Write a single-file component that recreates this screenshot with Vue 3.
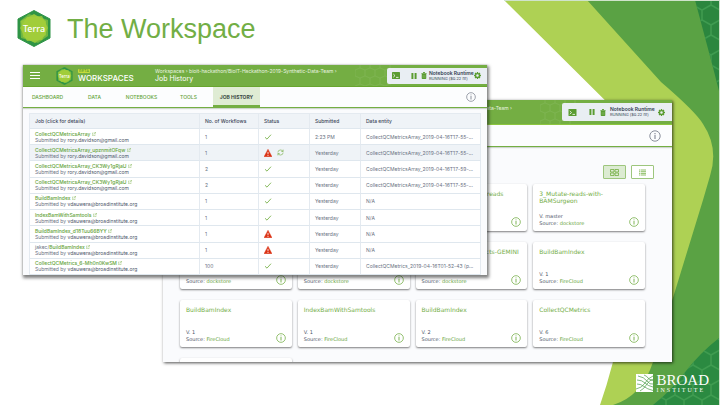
<script setup>
const crumb = 'Workspaces › bioit-hackathon/BioIT-Hackathon-2019-Synthetic-Data-Team ›'
const tabs = ['DASHBOARD', 'DATA', 'NOTEBOOKS', 'TOOLS', 'JOB HISTORY']
const rory = 'rory.davidson@gmail.com'
const vda = 'vdauwera@broadinstitute.org'

const jobs = [
  { name: 'CollectQCMetricsArray', by: rory, n: 1, ok: true, when: '2:23 PM', entity: 'CollectQCMetricsArray_2019-04-16T17-55-...' },
  { name: 'CollectQCMetricsArray_upznmitOFqw', by: rory, n: 1, ok: false, retry: true, when: 'Yesterday', entity: 'CollectQCMetricsArray_2019-04-16T17-55-...' },
  { name: 'CollectQCMetricsArray_CK3Wy1gRjaU', by: rory, n: 2, ok: true, when: 'Yesterday', entity: 'CollectQCMetricsArray_2019-04-16T17-59-...' },
  { name: 'CollectQCMetricsArray_CK3Wy1gRjaU', by: rory, n: 2, ok: true, when: 'Yesterday', entity: 'CollectQCMetricsArray_2019-04-16T17-55-...' },
  { name: 'BuildBamIndex', by: vda, n: 1, ok: true, when: 'Yesterday', entity: 'N/A' },
  { name: 'IndexBamWithSamtools', by: vda, n: 1, ok: true, when: 'Yesterday', entity: 'N/A' },
  { name: 'BuildBamIndex_d18Tuu66BYY', by: vda, n: 1, ok: false, when: 'Yesterday', entity: 'N/A' },
  { prefix: 'jakec/', name: 'BuildBamIndex', by: vda, n: 1, ok: false, when: 'Yesterday', entity: 'N/A' },
  { name: 'CollectQCMetrics_6-Mh0n0KwSM', by: vda, n: 100, ok: true, when: 'Yesterday', entity: 'CollectQCMetrics_2019-04-16T01-52-43 (p...' },
]

const tools = [
  {},
  {},
  { title: '2_Simulate-synthetic-reads', source: 'dockstore' },
  { title: '3_Mutate-reads-with-BAMSurgeon', v: 'master', source: 'dockstore' },
  { source: 'dockstore' },
  { source: 'dockstore' },
  { title: '6_Predict-variant-effects-GEMINI', source: 'dockstore' },
  { title: 'BuildBamIndex', v: '1', source: 'FireCloud' },
  { title: 'BuildBamIndex', v: '1', source: 'FireCloud' },
  { title: 'IndexBamWithSamtools', v: '1', source: 'FireCloud' },
  { title: 'BuildBamIndex', v: '2', source: 'FireCloud' },
  { title: 'CollectQCMetrics', v: '6', source: 'FireCloud' },
  {},
]
</script>

<template>
  <main class="slide">
    <svg class="defs" aria-hidden="true">
      <defs>
        <pattern id="hex" width="18" height="30" patternUnits="userSpaceOnUse">
          <path d="M9 0V5L0 10V20L9 25V30M9 5L18 10V20L9 25" fill="none" stroke="#3f9c50" stroke-width="1.5" />
        </pattern>
        <pattern id="hexbar" width="10" height="16" patternUnits="userSpaceOnUse">
          <path d="M5 0V3L0 5V11L5 13V16M5 3L10 5V11L5 13" fill="none" stroke="#8abb61" stroke-width="1" opacity=".4" />
        </pattern>
      </defs>
      <symbol id="terra" viewBox="0 0 34 37">
        <path d="M17 0.5L33 9V28L17 36.5L1 28V9Z" fill="#2f9446" stroke="#2f9446" stroke-linejoin="round" />
        <path d="M12 4L31 10L31 26L21 33L4 28L3 11Z" fill="#6fb640" />
        <path d="M17 4L29 11V25L18 33L6 27L4 11Z" fill="#94c83d" />
        <path d="M10 7L25 6L31 18L25 30L10 31L3 18Z" fill="#a6cf39" opacity=".75" />
        <text x="17" y="22" text-anchor="middle" font-family="Noto Sans" font-size="9" font-weight="500" fill="#fff">Terra</text>
      </symbol>
      <symbol id="terminal" viewBox="0 0 8 7">
        <rect width="8" height="7" rx=".6" fill="#5a9c31" />
        <path d="M1.3 2L3 3.6L1.3 5.2M4 5.4H6.5" fill="none" stroke="#fff" stroke-width=".8" />
      </symbol>
      <symbol id="pause" viewBox="0 0 6 7">
        <path d="M0 0H2.3V7H0ZM3.7 0H6V7H3.7Z" fill="#5a9c31" />
      </symbol>
      <symbol id="trash" viewBox="0 0 6 8">
        <path d="M0 1H1.8L2.2 0H3.8L4.2 1H6V2H0ZM.4 2.4H5.6V7.2Q5.6 8 4.8 8H1.2Q.4 8 .4 7.2Z" fill="#5a9c31" />
        <path d="M2 3.5V6.8M4 3.5V6.8" stroke="#a8cb8f" stroke-width=".5" />
      </symbol>
      <symbol id="gear" viewBox="0 0 8 8">
        <path d="M4 0V8M0 4H8M1.2 1.2L6.8 6.8M6.8 1.2L1.2 6.8" stroke="#5a9c31" stroke-width="1.5" />
        <circle cx="4" cy="4" r="2.2" fill="#e9eef3" stroke="#5a9c31" stroke-width="1.5" />
      </symbol>
      <symbol id="info" viewBox="0 0 12 12">
        <circle cx="6" cy="6" r="5.2" fill="none" stroke="currentColor" stroke-width="1" />
        <path d="M6 3V4M6 4.8V9" stroke="currentColor" stroke-width="1.2" />
      </symbol>
      <symbol id="check" viewBox="0 0 8 7">
        <path d="M.5 3.8L2.8 6L7.5 .8" fill="none" stroke="#74ae43" stroke-width="1" />
      </symbol>
      <symbol id="warn" viewBox="0 0 8 8">
        <path d="M4 .2L8 7.8H0Z" fill="#db3214" stroke="#db3214" stroke-width=".4" stroke-linejoin="round" />
        <path d="M4 2.8V5.3M4 6V7" stroke="#fff" stroke-width=".8" />
      </symbol>
      <symbol id="retry" viewBox="0 0 8 8">
        <path d="M1 3.8Q1.2 1.2 4 1.1Q5.8 1.2 7 2.8M7 .7V2.9H4.9M7 4.2Q6.8 6.8 4 6.9Q2.2 6.8 1 5.2M1 7.3V5.1H3.1" fill="none" stroke="#74ae43" stroke-width=".7" />
      </symbol>
      <symbol id="pop" viewBox="0 0 4 4">
        <path d="M1.6 1H.3V3.7H3V2.4M2.2 .3H3.7V1.8M3.7 .3L1.6 2.4" fill="none" stroke="#8abb61" stroke-width=".5" />
      </symbol>
    </svg>

    <svg class="art" viewBox="0 0 720 405" preserveAspectRatio="none" aria-hidden="true">
      <path d="M504 0H720V405H600Q614 365 622 320L640 135Z" fill="#aed154" />
      <path d="M587 0H719V405H613Q642 396 653 362L676 288L703 200L710 176Q719 148 703 124Q696 112 661 82Z" fill="#5aa244" />
      <path d="M695 0H719V91Q713 67 707 45Z" fill="#2b863e" />
      <path d="M695 0H719V91Q713 67 707 45Z" fill="url(#hex)" />
      <path d="M719 338Q700 353 686 371Q672 390 653 405H719Z" fill="#2b8a41" />
      <path d="M719 338Q700 353 686 371Q672 390 653 405H719Z" fill="url(#hex)" />
      <path d="M504 .5H720M719.5 0V405" stroke="#cfe3cb" stroke-width="1" />
    </svg>

    <header class="heading">
      <svg class="heading-logo" role="img" aria-label="Terra"><use href="#terra" /></svg>
      <h1>The Workspace</h1>
    </header>

    <section class="window back">
      <div class="bar">
        <svg class="bar-hex" aria-hidden="true"><rect width="100%" height="100%" fill="url(#hexbar)" /></svg>
        <span class="crumb">{{ crumb }}</span>
        <div class="runtime">
          <svg class="i-term"><use href="#terminal" /></svg>
          <svg class="i-pause"><use href="#pause" /></svg>
          <svg class="i-trash"><use href="#trash" /></svg>
          <p><strong>Notebook Runtime</strong><span>RUNNING ($0.22 hr)</span></p>
          <svg class="i-gear"><use href="#gear" /></svg>
        </div>
      </div>
      <div class="tabs">
        <svg class="i-info"><use href="#info" /></svg>
      </div>
      <div class="views">
        <button class="view on" type="button" aria-label="Grid view">
          <svg viewBox="0 0 9 7"><path d="M.5 .5H4V3H.5ZM5 .5H8.5V3H5ZM.5 4H4V6.5H.5ZM5 4H8.5V6.5H5Z" fill="none" stroke="#74ae43" stroke-width=".8" /></svg>
        </button>
        <button class="view" type="button" aria-label="List view">
          <svg viewBox="0 0 9 7"><path d="M1 1H2M1 2.7H2M1 4.4H2M1 6H2M2.6 1H8M2.6 2.7H8M2.6 4.4H8M2.6 6H8" stroke="#74ae43" stroke-width=".8" /></svg>
        </button>
      </div>
      <div class="cards">
        <article v-for="(t, i) in tools" :key="i" class="card">
          <h2 v-if="t.title">{{ t.title }}</h2>
          <div v-if="t.source" class="meta">
            <p><span v-if="t.v">V. {{ t.v }}<br /></span>Source: <a href="#">{{ t.source }}</a></p>
            <svg class="i-info"><use href="#info" /></svg>
          </div>
        </article>
      </div>
    </section>

    <section class="window front">
      <div class="bar">
        <svg class="bar-hex" aria-hidden="true"><rect width="100%" height="100%" fill="url(#hexbar)" /></svg>
        <button class="menu" type="button" aria-label="Menu"><i></i><i></i><i></i></button>
        <svg class="bar-logo" role="img" aria-label="Terra"><use href="#terra" /></svg>
        <div class="brand"><small>BETA</small><b>WORKSPACES</b></div>
        <div class="where"><span class="crumb">{{ crumb }}</span><b>Job History</b></div>
        <div class="runtime">
          <svg class="i-term"><use href="#terminal" /></svg>
          <svg class="i-pause"><use href="#pause" /></svg>
          <svg class="i-trash"><use href="#trash" /></svg>
          <p><strong>Notebook Runtime</strong><span>RUNNING ($0.22 hr)</span></p>
          <svg class="i-gear"><use href="#gear" /></svg>
        </div>
      </div>
      <nav class="tabs">
        <a v-for="t in tabs" :key="t" href="#" :class="{ active: t === 'JOB HISTORY' }">{{ t }}</a>
        <svg class="i-info"><use href="#info" /></svg>
      </nav>
      <div class="table-wrap">
        <table>
          <colgroup><col class="c-job" /><col class="c-num" /><col class="c-mid" /><col class="c-mid" /><col /></colgroup>
          <thead>
            <tr><th>Job (click for details)</th><th>No. of Workflows</th><th>Status</th><th>Submitted</th><th>Data entity</th></tr>
          </thead>
          <tbody>
            <tr v-for="(j, i) in jobs" :key="i" :class="{ hover: j.retry }">
              <td>
                <div>{{ j.prefix }}<a href="#">{{ j.name }}</a> <svg class="i-pop"><use href="#pop" /></svg></div>
                <div>Submitted by <span class="who">{{ j.by }}</span></div>
              </td>
              <td>{{ j.n }}</td>
              <td>
                <div class="status">
                  <svg v-if="j.ok" class="i-check"><use href="#check" /></svg>
                  <svg v-else class="i-warn"><use href="#warn" /></svg>
                  <svg v-if="j.retry" class="i-retry"><use href="#retry" /></svg>
                </div>
              </td>
              <td>{{ j.when }}</td>
              <td>{{ j.entity }}</td>
            </tr>
          </tbody>
        </table>
      </div>
    </section>

    <footer class="broad">
      <svg viewBox="0 0 17 18" aria-hidden="true">
        <rect width="17" height="18" fill="#fff" />
        <path d="M2 2Q8 3 11 7T17 10M1 6Q6 6 9 9T17 13M1 10Q5 10 8 12.5T17 16.5M0 15Q6 14 9 9T17 2M4 17Q8 15 11 10T17 6M8 1Q11 2 12 4T17 6" fill="none" stroke="#4b9c48" stroke-width=".7" />
      </svg>
      <div><b>BROAD</b><span>INSTITUTE</span></div>
    </footer>
  </main>
</template>

<style>
body {
  margin: 0;
  background: #fff;
}
</style>

<style scoped>
* {
  box-sizing: border-box;
}
.slide {
  position: relative;
  display: flex;
  flex-direction: column;
  justify-content: space-between;
  min-height: 100vh;
  overflow: hidden;
  font-family: Inter, "Open Sans", sans-serif;
  font-size: 5px;
  color: #6a7283;
}
p,
h1,
h2 {
  margin: 0;
}
a {
  color: #64a338;
  text-decoration: none;
  font-weight: 500;
}
button {
  padding: 0;
  border: 0;
  background: none;
}
svg {
  display: block;
  flex: none;
}
.defs {
  position: absolute;
  width: 0;
  height: 0;
}
.art {
  position: absolute;
  inset: 0;
  width: 100%;
  height: 100%;
}

.heading {
  position: relative;
  display: flex;
  align-items: center;
  gap: 16px;
  padding: 10px 17px;
}
.heading-logo {
  width: 34px;
  height: 37px;
}
.heading h1 {
  font: 27px/36px "Liberation Sans", Arial, sans-serif;
  color: #72ae45;
}

.window {
  position: absolute;
  display: flex;
  flex-direction: column;
  overflow: hidden;
  background: #fafbfd;
}
.front {
  top: 65px;
  right: 233px;
  bottom: 130px;
  left: 23px;
  box-shadow: 0 0 1px #8d928f, 1px 2px 3px 1px rgba(0, 0, 0, 0.5);
}
.back {
  top: 100px;
  right: 48px;
  bottom: 43px;
  left: 163px;
  box-shadow: 1px 1px 3px rgba(0, 0, 0, 0.7);
}

.bar {
  position: relative;
  display: flex;
  align-items: center;
  flex: none;
  height: 22px;
  padding-left: 7px;
  background: #74ae43;
  border-bottom: 1px solid #68a52f;
  color: #fff;
}
.back .bar {
  height: 25px;
  justify-content: flex-end;
  border-bottom-color: #8cc63f;
}
.bar-hex {
  position: absolute;
  top: 0;
  right: 96px;
  width: 36px;
  height: 100%;
}
.menu {
  display: flex;
  flex-direction: column;
  gap: 2px;
  width: 10px;
}
.menu i {
  height: 1px;
  background: #fff;
}
.bar-logo {
  width: 17px;
  height: 18px;
  margin-left: 16px;
}
.brand {
  display: flex;
  flex-direction: column;
  align-items: flex-start;
  width: 82px;
  padding-left: 5px;
}
.brand small {
  padding: 0 1px;
  border-radius: 1px;
  background: #c5dc3a;
  color: #5a9c31;
  font-size: 4px;
  line-height: 4px;
  font-weight: 500;
}
.brand b {
  font-size: 8px;
  line-height: 10px;
  font-weight: 500;
}
.where {
  position: relative;
  flex: 1;
  display: flex;
  flex-direction: column;
  white-space: nowrap;
}
.crumb {
  line-height: 6px;
  color: #eaf4e1;
  white-space: nowrap;
}
.where b {
  font-size: 7px;
  line-height: 9px;
  font-weight: 400;
}
.back .crumb {
  position: relative;
  padding: 0 50px 8px 0;
}
.runtime {
  position: relative;
  display: flex;
  align-items: center;
  width: 100px;
  height: 16px;
  padding-left: 5px;
  border-radius: 2px 0 0 2px;
  background: #e9eef3;
  color: #333f52;
}
.back .runtime {
  width: 110px;
  height: 18px;
  padding-left: 6px;
}
.i-term {
  width: 8px;
  height: 7px;
}
.i-pause {
  width: 6px;
  height: 6px;
  margin-left: 11px;
}
.i-trash {
  width: 6px;
  height: 7px;
  margin-left: 4px;
}
.i-gear {
  width: 7px;
  height: 7px;
  margin-left: auto;
  margin-right: 6px;
}
.back .i-term {
  width: 9px;
}
.back .i-pause {
  margin-left: 12px;
}
.back .i-trash {
  margin-left: 5px;
}
.back .runtime p {
  margin-left: 4px;
}
.back .i-gear {
  margin-right: 7px;
}
.runtime p {
  display: flex;
  flex-direction: column;
  margin-left: 2px;
  white-space: nowrap;
}
.runtime strong {
  line-height: 5px;
  font-weight: 600;
}
.runtime span {
  font-size: 4px;
  line-height: 5px;
}

.tabs {
  display: flex;
  align-items: stretch;
  flex: none;
  height: 21px;
  padding-left: 2px;
  background: #fcfdfe;
  border-bottom: 1px solid #74ae43;
  box-shadow: 0 1px 1px #ced6ce;
}
.back .tabs {
  height: 22px;
}
.tabs a {
  display: flex;
  align-items: center;
  justify-content: center;
  width: 47px;
  padding: 1px 2px 0 0;
  border-bottom: 2px solid transparent;
}
.tabs a.active {
  padding-right: 0;
  background: #dfecd4;
  border-color: #74ae43;
  color: #3b4a45;
  font-weight: 700;
}
.i-info {
  width: 10px;
  height: 10px;
  color: #7fb556;
}
.tabs .i-info {
  align-self: center;
  margin-left: auto;
  margin-right: 11px;
  color: #8b909c;
}
.back .tabs .i-info {
  width: 12px;
  height: 12px;
}

.table-wrap {
  flex: 1;
  padding: 5px 6px 0;
}
table {
  width: 100%;
  height: 100%;
  table-layout: fixed;
  border-collapse: separate;
  border-spacing: 0;
  border-left: 1px solid #e4eaf0;
  background: #fff;
}
.c-job {
  width: 170px;
}
.c-num {
  width: 59px;
}
.c-mid {
  width: 51px;
}
th,
td {
  height: 16px;
  padding: 0 0 0 5px;
  border-right: 1px solid #e4eaf0;
  border-bottom: 1px solid #dfe7ee;
  text-align: left;
  vertical-align: middle;
  white-space: nowrap;
  font-size: 5px;
  line-height: 6px;
}
th {
  background: #eff3f7;
  border-top: 1px solid #e4eaf0;
  color: #3b4558;
  font-weight: 500;
}
.hover td {
  background: #eff3f7;
}
.who {
  color: #4b5568;
}
.i-pop {
  display: inline-block;
  width: 4px;
  height: 4px;
}
.status {
  display: flex;
  align-items: center;
  gap: 5px;
}
.i-check {
  width: 8px;
  height: 6px;
}
.i-warn {
  width: 8px;
  height: 8px;
}
.i-retry {
  width: 7px;
  height: 7px;
}

.views {
  display: flex;
  justify-content: flex-end;
  gap: 5px;
  padding: 18px 18px 5px;
}
.view {
  display: flex;
  align-items: center;
  justify-content: center;
  width: 23px;
  height: 14px;
  border: 1px solid #9dc67d;
  border-radius: 1px;
  background: #fff;
}
.view.on {
  background: #dcebd2;
}
.view svg {
  width: 9px;
  height: 7px;
}
.cards {
  display: grid;
  grid-template-columns: repeat(4, 1fr);
  grid-auto-rows: 47px;
  gap: 11px 6px;
  padding: 0 27px 0 17px;
}
.card {
  display: flex;
  flex-direction: column;
  justify-content: space-between;
  padding: 6px 6px 4px;
  border-radius: 2px;
  background: #fff;
  box-shadow: 0 1px 2px rgba(0, 0, 0, 0.5);
}
.card h2 {
  font-family: "DejaVu Sans", sans-serif;
  font-size: 6px;
  line-height: 7px;
  font-weight: 400;
  color: #74ae48;
}
.meta {
  display: flex;
  align-items: flex-end;
  justify-content: space-between;
  margin-top: auto;
}
.meta p {
  line-height: 7px;
  color: #4a5366;
  font-family: "DejaVu Sans", sans-serif;
}
.meta a {
  font-weight: 400;
}

.broad {
  position: relative;
  display: flex;
  justify-content: flex-end;
  gap: 3px;
  padding: 0 11px 12px;
  color: #fff;
  font-family: "Liberation Serif", serif;
}
.broad svg {
  width: 17px;
  height: 18px;
}
.broad div {
  display: flex;
  flex-direction: column;
}
.broad b {
  font-size: 15px;
  line-height: 13px;
  font-weight: 400;
}
.broad span {
  font-size: 6px;
  line-height: 6px;
  letter-spacing: 2px;
}
</style>
